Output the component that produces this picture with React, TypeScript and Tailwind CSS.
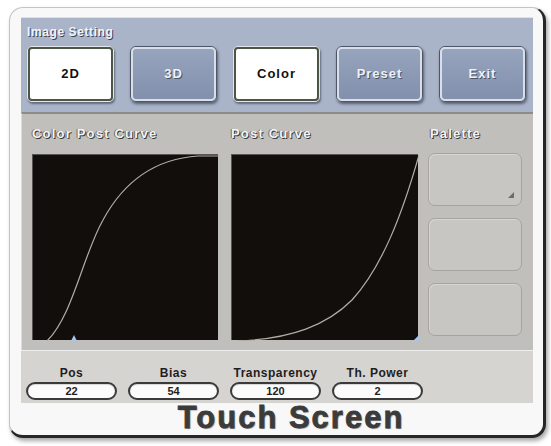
import React from "react";

const font = "font-['Liberation_Sans',Arial,sans-serif]";

const TopButton = ({ label, active }: { label: string; active?: boolean }) =>
  active ? (
    <div className="w-[87px] h-[56px] rounded-[5px] border border-[#e4e8ee] shadow-[1px_2px_2px_rgba(40,45,60,0.55)]">
      <div className="w-full h-full rounded-[4px] border-2 border-[#4d5545] bg-white flex items-center justify-center">
        <span className="text-[13px] font-bold tracking-[1px] text-[#111]">{label}</span>
      </div>
    </div>
  ) : (
    <div className="w-[87px] h-[56px] rounded-[6px] border border-[#4e5768] shadow-[1px_2px_3px_rgba(30,35,50,0.6)]">
      <div className="w-full h-full rounded-[5px] border-2 border-[#d9dee8] bg-gradient-to-b from-[#97a4bd] to-[#8290ad] flex items-center justify-center">
        <span className="text-[13px] font-bold tracking-[1px] text-[#eef1f6] [text-shadow:1px_1px_0_#4a5263]">
          {label}
        </span>
      </div>
    </div>
  );

const PanelTitle = ({ children }: { children: React.ReactNode }) => (
  <div className="h-[40px] flex items-center">
    <span className="text-[13px] font-bold tracking-[1.2px] text-[#f4f4f4] [text-shadow:1px_1px_0_#3c3c3c,-1px_0_0_#6a6a6a]">
      {children}
    </span>
  </div>
);

const CurveChart = ({ d, marker, w }: { d: string; marker: string; w: number }) => (
  <div className="h-[186px] bg-[#120e0c] border-t border-l border-[#555]" style={{ width: w }}>
    <svg width={w} height={186} viewBox={`0 0 ${w} 186`} className="block">
      <path d={d} fill="none" stroke="#b3ada5" strokeWidth="1.2" />
      <path d={marker} fill="#a9c4ea" />
    </svg>
  </div>
);

const Field = ({ label, value }: { label: string; value: string }) => (
  <div className="w-[91px] flex flex-col items-center">
    <span className="h-[14px] leading-[14px] text-[12px] font-bold tracking-[0.5px] text-[#1e1e1e]">{label}</span>
    <div className="mt-[2px] w-full h-[18px] rounded-full border-2 border-[#3a3a3a] bg-[#fbfbfb] flex items-center justify-center shadow-[inset_0_1px_1px_rgba(0,0,0,0.15)]">
      <span className="text-[11px] font-bold leading-none text-[#1e1e1e]">{value}</span>
    </div>
  </div>
);

export default function App() {
  return (
    <div className={`w-[551px] h-[446px] bg-white overflow-hidden ${font}`}>
      <div className="ml-[9px] mt-[7px] w-[537px] h-[431px] rounded-[14px] border border-[#c4c4c4] border-r-[3px] border-b-[3px] border-r-[#262626] border-b-[#262626] bg-[#f8f8f8] shadow-[2px_3px_4px_rgba(0,0,0,0.35)] pt-[9px] pl-[11px] flex flex-col">
        {/* header with the mode buttons */}
        <div className="w-[512px] h-[95px] bg-[#a9b4c9] border-t border-[#dde2ea] pl-[6px] pt-[6px]">
          <div className="h-[16px] flex items-center">
            <span className="text-[12px] font-bold tracking-[0.6px] text-[#f2f4f8] [text-shadow:1px_1px_0_#3d4352]">
              Image Setting
            </span>
          </div>
          <div className="mt-[6px] flex gap-[16px]">
            <TopButton label="2D" active />
            <TopButton label="3D" />
            <TopButton label="Color" active />
            <TopButton label="Preset" />
            <TopButton label="Exit" />
          </div>
        </div>

        {/* curves and palette */}
        <div className="w-[512px] h-[238px] bg-[#c1bfbc] border-t-2 border-[#8e8c89] border-l border-l-[#dcdcdc] pl-[10px] flex">
          <div className="flex flex-col">
            <PanelTitle>Color Post Curve</PanelTitle>
            <CurveChart
              w={186}
              d="M14,186 C40,160 50,100 70,65 C90,28 120,4 165,1 L186,1"
              marker="M38,186 L41,180 L44,186 Z"
            />
          </div>
          <div className="ml-[13px] flex flex-col">
            <PanelTitle>Post Curve</PanelTitle>
            <CurveChart
              w={187}
              d="M5,186 C60,184 95,170 120,145 C150,112 170,60 187,0"
              marker="M181,186 L187,180 L187,186 Z"
            />
          </div>
          <div className="ml-[10px] flex flex-col">
            <div className="h-[39px] flex items-center pl-[2px]">
              <span className="text-[13px] font-bold tracking-[1.2px] text-[#f4f4f4] [text-shadow:1px_1px_0_#3c3c3c,-1px_0_0_#6a6a6a]">
                Palette
              </span>
            </div>
            <div className="flex flex-col gap-[12px]">
              <div className="relative w-[94px] h-[53px] rounded-[7px] border border-[#a6a4a1] bg-[#c8c6c3] shadow-[inset_1px_1px_0_#d8d6d3]">
                <svg width="6" height="6" className="absolute right-[7px] bottom-[7px]">
                  <path d="M6,0 L6,6 L0,6 Z" fill="#6e6c69" />
                </svg>
              </div>
              <div className="w-[94px] h-[53px] rounded-[7px] border border-[#a6a4a1] bg-[#c8c6c3] shadow-[inset_1px_1px_0_#d8d6d3]" />
              <div className="w-[94px] h-[53px] rounded-[7px] border border-[#a6a4a1] bg-[#c8c6c3] shadow-[inset_1px_1px_0_#d8d6d3]" />
            </div>
          </div>
        </div>

        {/* parameter fields */}
        <div className="w-[512px] h-[53px] bg-[#d6d4d1] border-t border-[#eeeeee] pl-[5px] pt-[15px] flex gap-[11px]">
          <Field label="Pos" value="22" />
          <Field label="Bias" value="54" />
          <Field label="Transparency" value="120" />
          <Field label="Th. Power" value="2" />
        </div>

        <div className="w-[512px] flex-1 flex justify-center pl-[28px]">
          <span className="text-[31px] leading-[30px] font-black tracking-[2px] text-[#3b3b3b] [-webkit-text-stroke:0.8px_#3b3b3b] [text-shadow:1px_1px_1px_rgba(0,0,0,0.35)]">
            Touch Screen
          </span>
        </div>
      </div>
    </div>
  );
}
